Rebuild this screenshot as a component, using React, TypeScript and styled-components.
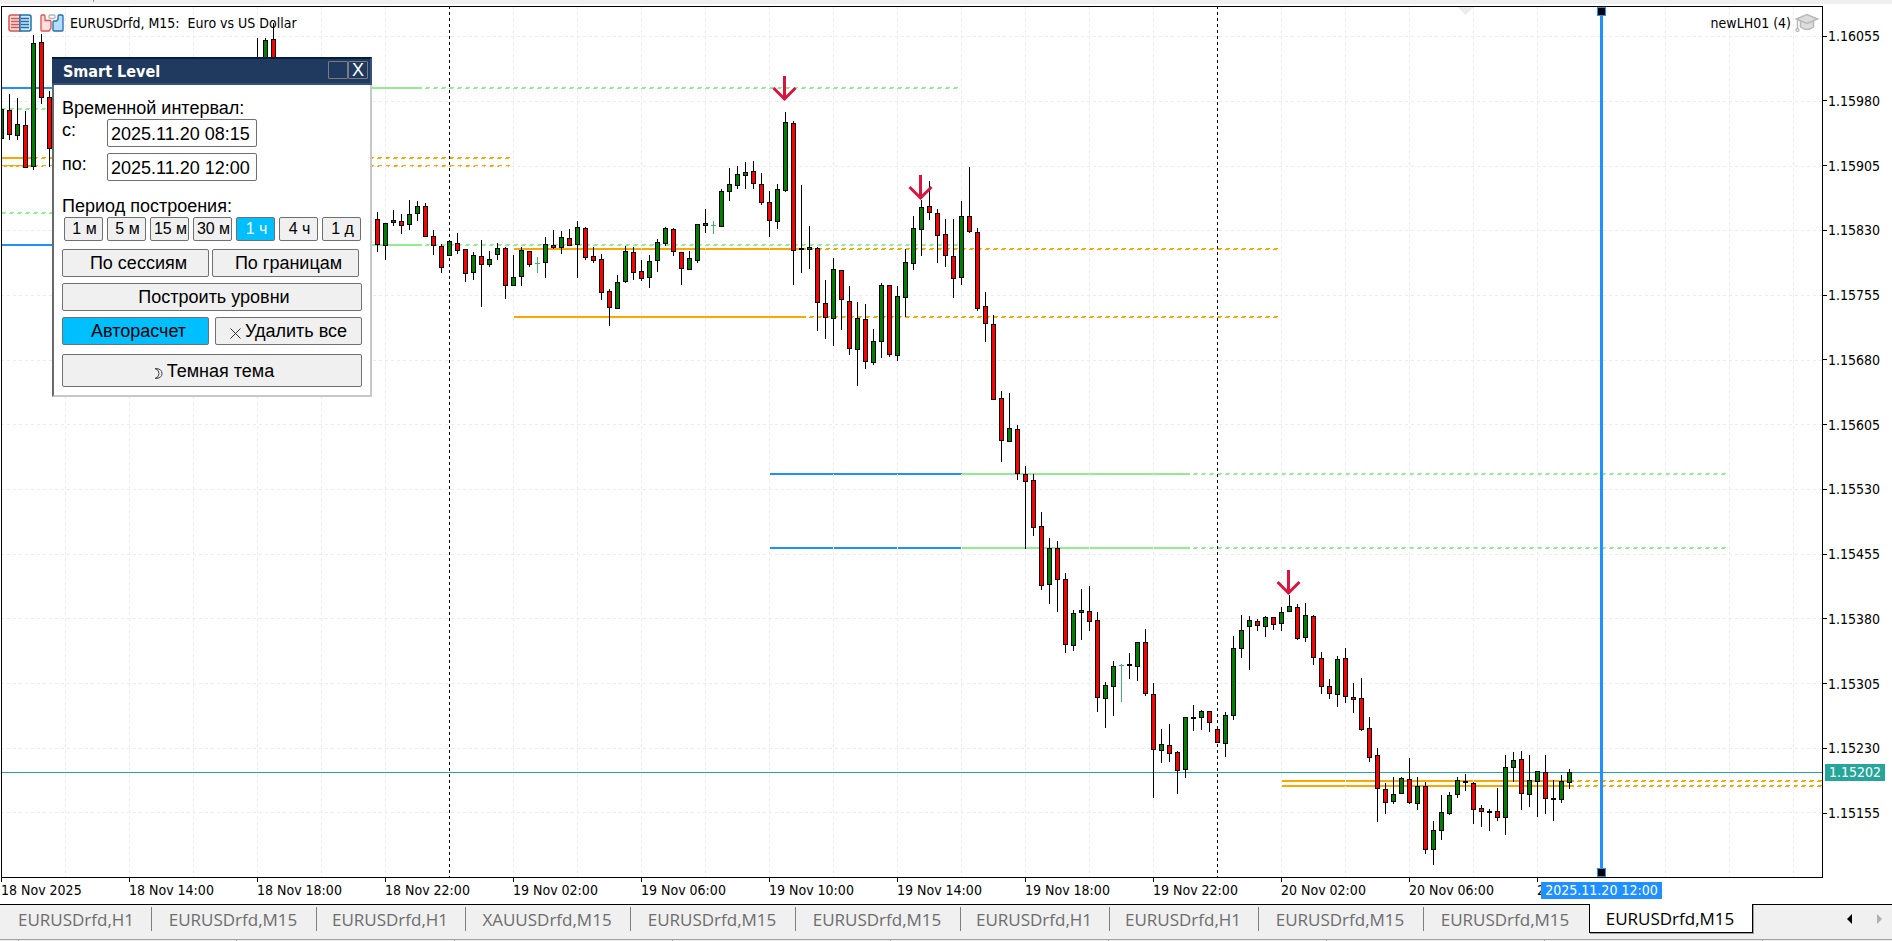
import React, { useState } from "react";
import styled, { createGlobalStyle, css } from "styled-components";

const uiFont = `"DejaVu Sans Condensed", "DejaVu Sans", sans-serif`;
const panelFont = `"Liberation Sans", Arial, sans-serif`;
const tabFont = `"Open Sans", "Noto Sans", sans-serif`;

const GlobalStyle = createGlobalStyle`
  *, *::before, *::after { box-sizing: border-box; }
  body { margin: 0; background: #ffffff; color: #000000; font-family: ${uiFont}; }
  button, input { font: inherit; color: inherit; }
`;

/* ---------- data ---------- */

type Kind = "up" | "down" | "flat" | "doji";
/* x centre, high, body top, body bottom, low, kind */
type Candle = [number, number, number, number, number, Kind];

const U: Kind = "up";
const D: Kind = "down";
const F: Kind = "flat";
const J: Kind = "doji";

const candles: Candle[] = [
  [1, 109, 109, 139, 139, U], [9, 94, 110, 135, 140, D], [17, 98, 124, 136, 140, U],
  [25, 111, 125, 168, 168, D], [33, 35, 43, 167, 170, U], [41, 34, 42, 98, 104, D],
  [49, 91, 97, 149, 167, D], [257, 38, 80, 120, 130, U], [265, 38, 40, 130, 140, U],
  [273, 23, 39, 120, 130, D],
  [377, 212, 219, 245, 252, D], [385, 223, 223, 246, 260, U], [393, 210, 220, 223, 226, U],
  [401, 214, 221, 226, 234, D], [409, 200, 214, 225, 230, U], [417, 201, 206, 214, 221, U],
  [425, 203, 206, 237, 237, D], [433, 230, 236, 246, 255, D], [441, 244, 246, 268, 273, D],
  [449, 240, 241, 256, 256, U], [457, 233, 243, 251, 254, D], [465, 249, 249, 274, 282, D],
  [473, 252, 255, 273, 280, U], [481, 240, 256, 265, 307, D], [489, 251, 259, 265, 267, U],
  [497, 243, 248, 255, 260, U], [505, 247, 248, 286, 299, D], [513, 255, 277, 286, 286, U],
  [521, 247, 250, 277, 286, U], [529, 251, 251, 265, 267, D], [537, 257, 263, 264, 273, J],
  [545, 237, 244, 263, 278, U], [553, 230, 245, 248, 249, D], [561, 231, 237, 248, 254, U],
  [569, 229, 238, 246, 246, D], [577, 221, 227, 245, 278, U], [585, 227, 228, 258, 260, D],
  [593, 247, 256, 261, 263, D], [601, 254, 259, 293, 300, D], [609, 289, 291, 308, 326, D],
  [617, 275, 282, 309, 309, U], [625, 246, 251, 282, 283, U], [633, 247, 252, 273, 280, D],
  [641, 260, 271, 279, 281, D], [649, 255, 261, 278, 288, U], [657, 239, 242, 261, 272, U],
  [665, 227, 228, 244, 246, U], [673, 228, 229, 252, 256, D], [681, 252, 252, 269, 285, D],
  [689, 251, 258, 270, 270, U], [697, 224, 224, 261, 263, U], [705, 209, 223, 226, 233, U],
  [713, 221, 225, 226, 234, J], [721, 189, 191, 227, 227, U], [729, 168, 184, 192, 201, U],
  [737, 166, 174, 186, 189, U], [745, 162, 172, 176, 189, U], [753, 161, 171, 184, 189, D],
  [761, 173, 184, 203, 205, D], [769, 191, 202, 221, 237, D], [777, 184, 189, 222, 229, U],
  [785, 112, 122, 191, 192, U], [793, 121, 123, 251, 285, D], [801, 185, 248, 250, 273, F],
  [809, 226, 247, 250, 269, U], [817, 247, 248, 303, 331, D], [825, 280, 303, 318, 339, D],
  [833, 258, 269, 319, 346, U], [841, 270, 270, 300, 330, D], [849, 286, 301, 349, 355, D],
  [857, 302, 318, 350, 386, U], [865, 304, 319, 362, 369, D], [873, 329, 341, 363, 365, U],
  [881, 283, 285, 342, 358, U], [889, 285, 285, 355, 357, D], [897, 286, 296, 356, 361, U],
  [905, 249, 262, 298, 317, U], [913, 216, 228, 264, 270, U], [921, 200, 207, 230, 256, U],
  [929, 181, 206, 213, 220, D], [937, 209, 213, 236, 263, D], [945, 219, 234, 256, 267, D],
  [953, 219, 256, 279, 298, D], [961, 201, 216, 278, 285, U], [969, 167, 216, 232, 233, D],
  [977, 228, 232, 309, 311, D], [985, 292, 306, 324, 342, D], [993, 315, 324, 400, 400, D],
  [1001, 391, 398, 441, 462, D], [1009, 393, 428, 442, 442, U], [1017, 425, 429, 474, 480, D],
  [1025, 466, 474, 482, 549, D], [1033, 474, 480, 528, 536, D], [1041, 512, 526, 586, 590, D],
  [1049, 538, 548, 585, 604, U], [1057, 541, 548, 580, 612, D], [1065, 573, 579, 645, 653, D],
  [1073, 610, 613, 646, 651, U], [1081, 589, 610, 613, 640, U], [1089, 586, 611, 622, 631, D],
  [1097, 612, 620, 698, 712, D], [1105, 682, 685, 699, 728, U], [1113, 661, 666, 687, 716, U],
  [1121, 664, 665, 666, 702, J], [1129, 653, 664, 666, 679, F], [1137, 642, 642, 667, 681, U],
  [1145, 629, 642, 694, 696, D], [1153, 683, 694, 750, 798, D], [1161, 729, 744, 751, 763, U],
  [1169, 724, 745, 754, 762, D], [1177, 751, 752, 771, 794, D], [1185, 717, 717, 770, 778, U],
  [1193, 705, 717, 719, 731, F], [1201, 710, 711, 718, 730, U], [1209, 711, 711, 723, 732, D],
  [1217, 726, 729, 743, 743, D], [1225, 712, 715, 744, 757, U], [1233, 636, 648, 716, 720, U],
  [1241, 615, 630, 649, 658, U], [1249, 616, 620, 627, 670, U], [1257, 619, 621, 626, 631, D],
  [1265, 616, 617, 627, 637, U], [1273, 617, 617, 625, 630, D], [1281, 607, 612, 624, 631, U],
  [1289, 595, 606, 612, 612, U], [1297, 604, 607, 639, 640, D], [1305, 603, 615, 638, 642, U],
  [1313, 615, 616, 658, 665, D], [1321, 652, 658, 687, 694, D], [1329, 679, 686, 694, 699, D],
  [1337, 656, 659, 695, 707, U], [1345, 648, 658, 697, 703, D], [1353, 683, 697, 700, 713, D],
  [1361, 678, 698, 730, 731, D], [1369, 717, 728, 758, 762, D], [1377, 748, 755, 789, 822, D],
  [1385, 783, 789, 803, 814, D], [1393, 777, 794, 802, 804, U], [1401, 777, 778, 794, 794, U],
  [1409, 758, 779, 803, 804, D], [1417, 777, 786, 804, 810, U], [1425, 782, 786, 850, 854, D],
  [1433, 821, 830, 850, 865, U], [1441, 795, 812, 831, 840, U], [1449, 792, 795, 814, 815, U],
  [1457, 777, 780, 795, 798, U], [1465, 774, 781, 783, 791, F], [1473, 782, 783, 810, 824, D],
  [1481, 805, 808, 812, 827, D], [1489, 809, 811, 813, 831, F], [1497, 788, 811, 818, 821, D],
  [1505, 755, 767, 818, 835, U], [1513, 752, 760, 768, 782, U], [1521, 751, 759, 794, 810, D],
  [1529, 755, 780, 795, 807, U], [1537, 771, 771, 782, 817, U], [1545, 755, 772, 799, 814, D],
  [1553, 780, 798, 800, 821, F], [1561, 775, 781, 800, 803, U], [1569, 769, 772, 783, 789, U],
];

const GREEN = "#90ee90";
const ORANGE = "#ffa500";
const BLUE = "#1e90ff";

type Level = { y: number; from: number; to: number; color: string; dashed?: boolean };

const levels: Level[] = [
  { y: 87, from: 2, to: 200, color: BLUE },
  { y: 87, from: 200, to: 422, color: GREEN },
  { y: 87, from: 425, to: 958, color: GREEN, dashed: true },
  { y: 108, from: 1, to: 200, color: GREEN, dashed: true },
  { y: 157, from: 2, to: 33, color: ORANGE },
  { y: 157, from: 33, to: 510, color: ORANGE, dashed: true },
  { y: 165, from: 2, to: 33, color: ORANGE },
  { y: 165, from: 33, to: 510, color: ORANGE, dashed: true },
  { y: 212, from: 1, to: 200, color: GREEN, dashed: true },
  { y: 244, from: 2, to: 200, color: BLUE },
  { y: 244, from: 200, to: 422, color: GREEN },
  { y: 244, from: 425, to: 958, color: GREEN, dashed: true },
  { y: 248, from: 514, to: 806, color: ORANGE },
  { y: 248, from: 809, to: 1279, color: ORANGE, dashed: true },
  { y: 316, from: 514, to: 806, color: ORANGE },
  { y: 316, from: 809, to: 1279, color: ORANGE, dashed: true },
  { y: 473, from: 770, to: 962, color: BLUE },
  { y: 473, from: 962, to: 1190, color: GREEN },
  { y: 473, from: 1193, to: 1726, color: GREEN, dashed: true },
  { y: 547, from: 770, to: 962, color: BLUE },
  { y: 547, from: 962, to: 1190, color: GREEN },
  { y: 547, from: 1193, to: 1726, color: GREEN, dashed: true },
  { y: 780, from: 1282, to: 1574, color: ORANGE },
  { y: 780, from: 1577, to: 4000, color: ORANGE, dashed: true },
  { y: 785, from: 1282, to: 1574, color: ORANGE },
  { y: 785, from: 1577, to: 4000, color: ORANGE, dashed: true },
];

const gridRows = [36, 101, 166, 230, 295, 360, 424, 489, 554, 618, 683, 748, 812];
const gridColumns = Array.from({ length: 56 }, (_, i) => 65 + i * 64);
const daySeparators = [449, 1217];
const sellArrows = [[784, 76], [920, 175], [1288, 570]];

const prices = [
  "1.16055", "1.15980", "1.15905", "1.15830", "1.15755", "1.15680", "1.15605",
  "1.15530", "1.15455", "1.15380", "1.15305", "1.15230", "1.15155",
];

const times = [
  "18 Nov 2025", "18 Nov 14:00", "18 Nov 18:00", "18 Nov 22:00", "19 Nov 02:00",
  "19 Nov 06:00", "19 Nov 10:00", "19 Nov 14:00", "19 Nov 18:00", "19 Nov 22:00",
  "20 Nov 02:00", "20 Nov 06:00", "20 Nov 10:00",
];

const tabs = [
  "EURUSDrfd,H1", "EURUSDrfd,M15", "EURUSDrfd,H1", "XAUUSDrfd,M15", "EURUSDrfd,M15",
  "EURUSDrfd,M15", "EURUSDrfd,H1", "EURUSDrfd,H1", "EURUSDrfd,M15", "EURUSDrfd,M15",
  "EURUSDrfd,M15",
];

const periods = ["1 м", "5 м", "15 м", "30 м", "1 ч", "4 ч", "1 д"];

/* ---------- page frame ---------- */

const Page = styled.div`
  display: flex;
  flex-direction: column;
  min-height: 100vh;
  overflow-x: hidden;
`;

const TopStrip = styled.div`
  height: 4px;
  background: #f0f0f0;
  margin-bottom: 2px;
  padding-left: 93px;

  &::after {
    content: "";
    display: block;
    width: 1px;
    height: 2px;
    background: #909090;
  }
`;

const ChartRow = styled.main`
  flex: 1;
  display: grid;
  grid-template-columns: minmax(0, 1fr) 69px;
  padding-left: 1px;
`;

const Plot = styled.section`
  position: relative;
  border: 1px solid #000000;
`;

const Canvas = styled.svg`
  position: absolute;
  inset: 0;
  width: 100%;
  height: 100%;
  display: block;
`;

const PlotHeader = styled.header`
  position: relative;
  display: flex;
  align-items: center;
  gap: 6px;
  padding: 6px 3px 0 6px;
  height: 26px;
  font-size: 14px;
  line-height: 20px;
  white-space: pre;
`;

const HeaderIcons = styled.div`
  display: flex;
  gap: 8px;
`;

const ChartTitle = styled.h1`
  margin: 0;
  flex: 1;
  font-size: 14px;
  font-weight: 400;
`;

const Expert = styled.div`
  display: flex;
  align-items: center;
  gap: 4px;
`;

const PriceAxis = styled.ol`
  position: relative;
  list-style: none;
  margin: 0;
  padding: 22px 0 57px;
  display: flex;
  flex-direction: column;
  justify-content: space-between;
  font-size: 14px;
  line-height: 16px;
`;

const PriceLabel = styled.li`
  display: flex;
  align-items: center;
  gap: 1px;

  &::before {
    content: "";
    width: 4px;
    height: 1px;
    background: #000000;
  }
`;

const CurrentPrice = styled.li`
  position: absolute;
  left: 2px;
  top: 758px;
  width: 60px;
  padding-left: 4px;
  background: #26a69a;
  color: #ffffff;
  line-height: 17px;
`;

const TimeAxis = styled.ol`
  position: relative;
  list-style: none;
  margin: 0;
  padding: 0 0 0 1px;
  height: 26px;
  display: flex;
  overflow: hidden;
  font-size: 14px;
  line-height: 16px;
  white-space: nowrap;
`;

const TimeLabel = styled.li`
  flex: 0 0 128px;

  &::before {
    content: "";
    display: block;
    width: 1px;
    height: 4px;
    background: #000000;
  }
`;

const TimeMarker = styled.li`
  position: absolute;
  left: 1541px;
  top: 4px;
  width: 121px;
  text-align: center;
  background: #1e90ff;
  color: #ffffff;
  line-height: 17px;
`;

/* ---------- chart tabs ---------- */

const TabBar = styled.nav`
  display: flex;
  align-items: flex-start;
  height: 35px;
  padding-left: 3px;
  background: #f0f0f0;
  border-top: 1px solid #000000;
  font-family: ${tabFont};
`;

const Tab = styled.button<{ $wide: boolean; $active: boolean; $last: boolean }>`
  flex: 0 0 ${(p) => (p.$wide ? 165 : 149)}px;
  height: 24px;
  margin-top: 2px;
  padding: 2px 2px 0 0;
  border: 0;
  border-right: 1px solid ${(p) => (p.$last ? "transparent" : "#808080")};
  background: transparent;
  color: #6d6d6d;
  font-size: 17px;
  line-height: 22px;
  white-space: nowrap;

  ${(p) =>
    p.$active &&
    css`
      flex-basis: 164px;
      height: 29px;
      margin-top: -1px;
      border: 1px solid #000000;
      border-top: 0;
      background: #ffffff;
      color: #000000;
      box-shadow: 1px 1px 0 #a0a0a0;
    `}
`;

const Scroller = styled.div`
  display: flex;
  gap: 22px;
  margin: 7px 7px 0 auto;
`;

const ScrollButton = styled.button`
  display: flex;
  align-items: center;
  width: 8px;
  height: 14px;
  padding: 0;
  border: 0;
  background: transparent;
`;

const StatusStrip = styled.div`
  height: 2px;
  border-top: 1px solid #a0a0a0;
  background: repeating-linear-gradient(to right, #a0a0a0 0 1px, #f0f0f0 1px 218px);
  background-position-x: 18px;
`;

/* ---------- Smart Level window ---------- */

const Window = styled.form`
  position: absolute;
  left: 50px;
  top: 50px;
  width: 320px;
  background: #ffffff;
  border: 2px solid #c8c8c8;
  border-top: 0;
  border-left-color: #696969;
  font-family: ${panelFont};
  font-size: 18px;
  line-height: 20px;
`;

const TitleBar = styled.div`
  display: flex;
  align-items: center;
  height: 28px;
  margin: 0 -2px;
  padding: 0 2px 0 11px;
  background: #203a5f;
  border-top: 2px solid #001f3d;
  border-bottom: 2px solid #35517d;
  border-right: 2px solid #35517d;
  color: #ffffff;
`;

const WindowTitle = styled.h2`
  flex: 1;
  margin: 0;
  padding-top: 2px;
  font-family: ${uiFont};
  font-size: 16px;
  font-weight: 700;
  line-height: 22px;
`;

const CaptionButton = styled.button`
  width: 20px;
  height: 18px;
  margin-bottom: 2px;
  padding: 0;
  border: 1px solid #7c7c7c;
  border-radius: 1px;
  background: transparent;
  font-size: 18px;
  line-height: 16px;
`;

const WindowBody = styled.div`
  display: flex;
  flex-direction: column;
  gap: 6px;
  padding: 12px 8px 8px;
`;

const Group = styled.fieldset`
  margin: 0;
  padding: 0;
  border: 0;
  min-width: 0;
`;

const GroupTitle = styled.legend`
  padding: 0;
  height: 22px;
  line-height: 22px;
`;

const Field = styled.div`
  display: flex;
  margin-bottom: 6px;
`;

const FieldLabel = styled.label`
  width: 45px;
  line-height: 22px;
`;

const DateInput = styled.input`
  width: 150px;
  height: 28px;
  padding: 2px 3px 0;
  border: 1px solid #707070;
  border-radius: 2px;
  background: #ffffff;
`;

const PeriodGroup = styled(Group)`
  margin-top: 2px;
`;

const Row = styled.div`
  display: flex;
  justify-content: space-between;
`;

const PeriodRow = styled.div`
  display: flex;
  gap: 4px;
  padding-left: 2px;
  margin-bottom: 2px;
`;

const PushButton = styled.button<{ $on?: boolean }>`
  flex: 0 0 147px;
  height: 28px;
  padding: 0 0 0 6px;
  border: 1px solid #707070;
  border-radius: 2px;
  background: ${(p) => (p.$on ? "#00bfff" : "#f0f0f0")};
  white-space: nowrap;
`;

const GlyphButton = styled(PushButton)`
  padding: 0;
`;

const PeriodButton = styled(PushButton)`
  flex: 0 0 39px;
  height: 24px;
  padding: 0 0 0 2px;
  color: ${(p) => (p.$on ? "#ffffff" : "#000000")};
  font-size: 16px;
`;

const SessionRow = styled(Row)`
  justify-content: flex-start;
  gap: 3px;
`;

const WideButton = styled(PushButton)`
  flex: none;
  width: 100%;
  padding: 0 0 0 4px;
`;

const ThemeButton = styled(WideButton)`
  height: 33px;
  margin-top: 3px;
`;

const Glyph = styled.svg`
  margin-right: 4px;
  vertical-align: -2px;
`;

/* ---------- drawings ---------- */

function LevelLine({ level }: { level: Level }) {
  const { y, from, to, color, dashed } = level;
  if (!dashed) return <rect x={from} y={y} width={to - from} height={2} fill={color} />;
  return (
    <g stroke={color} strokeDasharray="4 4">
      <line x1={from + 1} x2={to} y1={y + 0.5} y2={y + 0.5} />
      <line x1={from} x2={to} y1={y + 1.5} y2={y + 1.5} />
    </g>
  );
}

function CandleMark({ candle }: { candle: Candle }) {
  const [x, high, top, bottom, low, kind] = candle;
  const ink = kind === "doji" ? "#3cb371" : "#000000";
  return (
    <g>
      <rect x={x} y={high} width={1} height={low - high} fill={ink} />
      <rect x={x - 2} y={top} width={5} height={bottom - top} fill={ink} />
      {(kind === "up" || kind === "down") && (
        <rect
          x={x - 1}
          y={top + 1}
          width={3}
          height={bottom - top - 2}
          fill={kind === "up" ? "#008000" : "#ff0000"}
        />
      )}
    </g>
  );
}

function ChartCanvas() {
  return (
    <Canvas aria-hidden="true" shapeRendering="crispEdges">
      <g transform="translate(-2 -7)">
        {levels.map((level, i) => (
          <LevelLine key={i} level={level} />
        ))}
        <g stroke="#ececec" strokeDasharray="3 3">
          {gridRows.map((y) => (
            <line key={y} x1={1} x2="110%" y1={y + 0.5} y2={y + 0.5} />
          ))}
          {gridColumns.map((x) => (
            <line key={x} x1={x + 0.5} x2={x + 0.5} y1={6} y2="110%" />
          ))}
        </g>
        <g stroke="#000000" strokeDasharray="3 3">
          {daySeparators.map((x) => (
            <line key={x} x1={x + 0.5} x2={x + 0.5} y1={6} y2="110%" />
          ))}
        </g>
        <rect x={0} y={772} width="110%" height={1} fill="#26a69a" />
        {candles.map((candle) => (
          <CandleMark key={candle[0]} candle={candle} />
        ))}
        <g fill="none" stroke="#dc143c" strokeWidth={3} shapeRendering="auto">
          {sellArrows.map(([x, y]) => (
            <path key={x} d={`M${x + 0.5} ${y}v24M${x - 10.5} ${y + 12}l11 11l11 -11`} />
          ))}
        </g>
        <path d="M1458 7h15l-7.500 8z" fill="#eeeaf0" />
      </g>
      <svg x={1595} y="0" width={9} height="100%">
        <rect x={3} y={0} width={3} height="100%" fill={BLUE} />
        <rect x={0} y={0} width={9} height={9} fill={BLUE} />
        <rect x={1} y={1} width={7} height={7} fill="#000000" />
      </svg>
      <svg x={1595} y="100%" width={9} height={9} overflow="visible">
        <rect x={0} y={-9} width={9} height={9} fill={BLUE} />
        <rect x={1} y={-8} width={7} height={7} fill="#000000" />
      </svg>
    </Canvas>
  );
}

function DepthIcon() {
  return (
    <svg width="24" height="18" viewBox="0 0 24 18" aria-hidden="true">
      <path d="M12 1H3Q1 1 1 3v12q0 2 2 2h9z" fill="#fde0de" stroke="#d9534f" strokeWidth="1.500" />
      <path d="M12 1h9q2 0 2 2v12q0 2-2 2h-9z" fill="#cfe9fb" stroke="#1f6fae" strokeWidth="1.500" />
      <path d="M3 4.500h8M3 7.500h8M3 10.500h8M3 13.500h8" stroke="#d9534f" strokeWidth="1.300" />
      <path d="M13 4.500h8M13 7.500h8M13 10.500h8M13 13.500h8" stroke="#1f6fae" strokeWidth="1.300" />
    </svg>
  );
}

function TradeIcon() {
  return (
    <svg width="24" height="18" viewBox="0 0 24 18" aria-hidden="true">
      <path d="M1 2q0-1 1-1h2q1 0 1 1v4.500h5q1 0 1 1V14l-2 3H2q-1 0-1-1z" fill="#fde0de" stroke="#d9534f" strokeWidth="1.300" />
      <path d="M23 2q0-1-1-1h-3q-1 0-1 1v3.500l-1.500 1.500H14q-1 0-1 1v8q0 1 1 1h8q1 0 1-1z" fill="#b5dcf8" stroke="#1f6fae" strokeWidth="1.300" />
      <rect x="9" y="1" width="6" height="3.500" rx="1" fill="#ffffff" stroke="#b4b4b4" strokeWidth="1.300" />
    </svg>
  );
}

function CapIcon() {
  return (
    <svg width="24" height="20" viewBox="0 0 24 20" aria-hidden="true">
      <path d="M5.500 8v6q6.500 5 13 0V8" fill="#dcdcdc" stroke="#b9b9b9" strokeWidth="1.500" />
      <path d="M1.500 6L12 1.500L22.500 6L12 10.500z" fill="#dcdcdc" stroke="#b9b9b9" strokeWidth="1.500" />
      <path d="M2.500 6v10" stroke="#b9b9b9" strokeWidth="1.500" />
      <circle cx="2.500" cy="17" r="1.500" fill="none" stroke="#b9b9b9" strokeWidth="1.300" />
    </svg>
  );
}

/* ---------- panel ---------- */

function SmartLevelWindow() {
  const [from, setFrom] = useState("2025.11.20 08:15");
  const [to, setTo] = useState("2025.11.20 12:00");
  const [period, setPeriod] = useState("1 ч");
  const [auto, setAuto] = useState(true);

  return (
    <Window onSubmit={(e) => e.preventDefault()}>
      <TitleBar>
        <WindowTitle>Smart Level</WindowTitle>
        <CaptionButton type="button" aria-label="Свернуть" />
        <CaptionButton type="button">X</CaptionButton>
      </TitleBar>
      <WindowBody>
        <Group>
          <GroupTitle>Временной интервал:</GroupTitle>
          <Field>
            <FieldLabel htmlFor="from">с:</FieldLabel>
            <DateInput id="from" value={from} onChange={(e) => setFrom(e.target.value)} />
          </Field>
          <Field>
            <FieldLabel htmlFor="to">по:</FieldLabel>
            <DateInput id="to" value={to} onChange={(e) => setTo(e.target.value)} />
          </Field>
        </Group>
        <PeriodGroup>
          <GroupTitle>Период построения:</GroupTitle>
          <PeriodRow>
            {periods.map((name) => (
              <PeriodButton
                key={name}
                type="button"
                $on={name === period}
                aria-pressed={name === period}
                onClick={() => setPeriod(name)}
              >
                {name}
              </PeriodButton>
            ))}
          </PeriodRow>
        </PeriodGroup>
        <SessionRow>
          <PushButton type="button">По сессиям</PushButton>
          <PushButton type="button">По границам</PushButton>
        </SessionRow>
        <WideButton type="submit">Построить уровни</WideButton>
        <Row>
          <PushButton type="button" $on={auto} aria-pressed={auto} onClick={() => setAuto(!auto)}>
            Авторасчет
          </PushButton>
          <GlyphButton type="button">
            <Glyph width="11" height="11" viewBox="0 0 11 11" aria-hidden="true">
              <path d="M0.500 0.500l10 10M10.500 0.500l-10 10" stroke="#333333" strokeWidth="1" />
            </Glyph>
            Удалить все
          </GlyphButton>
        </Row>
        <ThemeButton type="button">
          <Glyph width="9" height="11" viewBox="0 0 9 11" aria-hidden="true">
            <path d="M1 0.500q7 0 7 5t-7 5q4-1 4-5t-4-5z" fill="none" stroke="#444444" strokeWidth="1" />
          </Glyph>
          Темная тема
        </ThemeButton>
      </WindowBody>
    </Window>
  );
}

export default function App() {
  const [active, setActive] = useState(tabs.length - 1);

  return (
    <Page>
      <GlobalStyle />
      <TopStrip />
      <ChartRow>
        <Plot>
          <ChartCanvas />
          <PlotHeader>
            <HeaderIcons>
              <DepthIcon />
              <TradeIcon />
            </HeaderIcons>
            <ChartTitle>{"EURUSDrfd, M15:  Euro vs US Dollar"}</ChartTitle>
            <Expert>
              newLH01 (4)
              <CapIcon />
            </Expert>
          </PlotHeader>
          <SmartLevelWindow />
        </Plot>
        <PriceAxis>
          {prices.map((price) => (
            <PriceLabel key={price}>{price}</PriceLabel>
          ))}
          <CurrentPrice>1.15202</CurrentPrice>
        </PriceAxis>
      </ChartRow>
      <TimeAxis>
        {times.map((time) => (
          <TimeLabel key={time}>{time}</TimeLabel>
        ))}
        <TimeMarker>2025.11.20 12:00</TimeMarker>
      </TimeAxis>
      <TabBar>
        {tabs.map((name, i) => (
          <Tab
            key={i}
            type="button"
            $wide={name.endsWith("M15")}
            $active={i === active}
            $last={i === active - 1}
            onClick={() => setActive(i)}
          >
            {name}
          </Tab>
        ))}
        <Scroller>
          <ScrollButton type="button" aria-label="Назад">
            <svg width="5" height="10" viewBox="0 0 5 10" aria-hidden="true">
              <path d="M5 0v10L0 5z" fill="#000000" />
            </svg>
          </ScrollButton>
          <ScrollButton type="button" aria-label="Вперёд">
            <svg width="5" height="10" viewBox="0 0 5 10" aria-hidden="true">
              <path d="M0 0v10L5 5z" fill="#b0b0b0" />
            </svg>
          </ScrollButton>
        </Scroller>
      </TabBar>
      <StatusStrip />
    </Page>
  );
}
